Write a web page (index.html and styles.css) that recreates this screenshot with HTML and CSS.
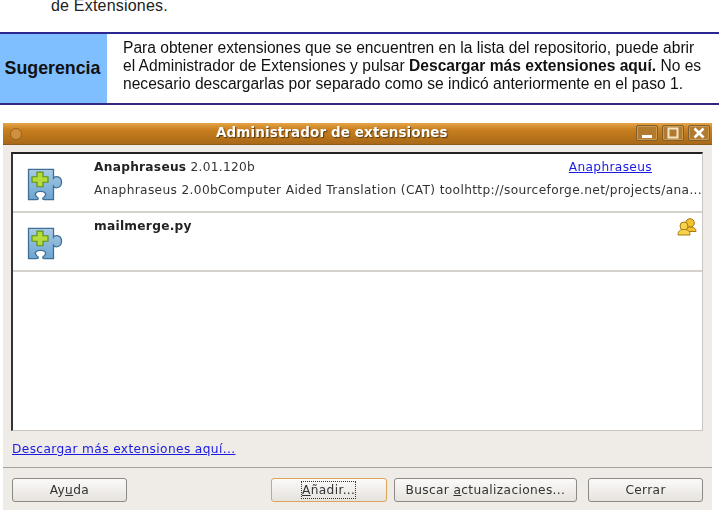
FILE: index.html
```html
<!DOCTYPE html>
<html lang="es">
<head>
<meta charset="UTF-8">
<title>Administrador de extensiones</title>
<link rel="stylesheet" href="styles.css">
</head>
<body>
<p class="step">de Extensiones.</p>

<div class="tip">
  <div class="tip-label">Sugerencia</div>
  <div class="tip-text">Para obtener extensiones que se encuentren en la lista del repositorio, puede abrir el Administrador de Extensiones y pulsar <strong>Descargar más extensiones aquí.</strong> No es necesario descargarlas por separado como se indicó anteriormente en el paso 1.</div>
</div>

<div class="window">
  <div class="titlebar">
    <span class="title-dot"></span>
    <span class="title">Administrador de extensiones</span>
    <div class="title-buttons">
      <span class="title-btn"><svg width="14" height="12" viewBox="0 0 14 12"><rect x="2" y="8" width="10" height="3" fill="#fff"/></svg></span>
      <span class="title-btn"><svg width="14" height="12" viewBox="0 0 14 12"><rect x="2.500" y="1.500" width="9" height="9" fill="none" stroke="#f5e6c8" stroke-width="2"/></svg></span>
      <span class="title-btn"><svg width="14" height="12" viewBox="0 0 14 12"><path d="M2.500 1.500l9 9M11.500 1.500l-9 9" stroke="#fff" stroke-width="2.600"/></svg></span>
    </div>
  </div>
  <div class="content">
    <div class="list">
      <div class="row">
        <svg class="puzzle" width="36" height="33" viewBox="0 0 36 36" preserveAspectRatio="none">
          <use href="#puzzle-shape"/>
        </svg>
        <div class="row-main">
          <div class="row-head">
            <span><b>Anaphraseus</b> 2.01.120b</span>
            <a class="row-link" href="#">Anaphraseus</a>
          </div>
          <div class="row-desc">Anaphraseus 2.00bComputer Aided Translation (CAT) toolhttp://sourceforge.net/projects/ana...</div>
        </div>
      </div>
      <div class="row">
        <svg class="puzzle" width="36" height="33" viewBox="0 0 36 36" preserveAspectRatio="none">
          <defs>
            <linearGradient id="piece" x1="0" y1="0" x2="0" y2="1">
              <stop offset="0" stop-color="#a9cbe6"/>
              <stop offset="1" stop-color="#6ba5d0"/>
            </linearGradient>
            <g id="puzzle-shape">
              <path d="M1.500 1.500H26.500V11C28 8.500 34.500 8.500 34.500 15.500S28 22.500 26.500 20V34.500H17C15.500 34.500 15 33 17 31.500C20.500 28.500 18 25.500 13.500 25.500S6.500 28.500 10 31.500C12 33 11.500 34.500 10 34.500H1.500Z" fill="url(#piece)" stroke="#3f6f96" stroke-width="1.300"/>
              <path d="M10 4.500H16V9.500H21V15.500H16V20.500H10V15.500H5V9.500H10Z" fill="#b6dc3c" stroke="#5d8f1c" stroke-width="1.200"/>
            </g>
          </defs>
          <use href="#puzzle-shape"/>
        </svg>
        <div class="row-main">
          <div class="row-head">
            <span><b>mailmerge.py</b></span>
            <svg class="users" width="20" height="18" viewBox="0 0 20 18">
              <circle cx="13" cy="5" r="4.300" fill="#f2c230" stroke="#a87a10"/>
              <path d="M8 13.500c0-3.500 2-4.500 5-4.500s6 1 6 4.500z" fill="#f2c230" stroke="#a87a10"/>
              <circle cx="7" cy="8" r="4" fill="#f7d24a" stroke="#a87a10"/>
              <path d="M1 17c0-4 2-5.500 6-5.500S13 13 13 17z" fill="#f7d24a" stroke="#a87a10"/>
            </svg>
          </div>
        </div>
      </div>
    </div>
    <a class="more" href="#">Descargar más extensiones aquí...</a>
  </div>
  <div class="actions">
    <button class="btn btn-help">Ay<u>u</u>da</button>
    <button class="btn btn-add"><span class="focus"><u>A</u>ñadir...</span></button>
    <button class="btn btn-update">Buscar <u>a</u>ctualizaciones...</button>
    <button class="btn btn-close">Cerrar</button>
  </div>
</div>
</body>
</html>
```

FILE: styles.css
```css
html, body {
  margin: 0;
  height: 513px;
  overflow: hidden;
  background: #fff;
}

body {
  font-family: "Liberation Sans", Arial, sans-serif;
  color: #111;
}

.step {
  margin: 0;
  height: 32px;
  padding-left: 51px;
  font-size: 16px;
  letter-spacing: 0.2px;
  line-height: 12px;
  box-sizing: border-box;
  color: #222;
}

/* tip box */
.tip {
  display: flex;
  height: 73px;
  box-sizing: border-box;
  border-top: 2px solid #2b2690;
  border-bottom: 2px solid #322a80;
}

.tip-label {
  width: 107px;
  flex: none;
  background: #7fbfff;
  display: flex;
  align-items: center;
  justify-content: center;
  padding-right: 2px;
  box-sizing: border-box;
  font-size: 17.800px;
  font-weight: bold;
}

.tip-text {
  padding: 5px 12px 0 16px;
  font-size: 15.600px;
  line-height: 18px;
  filter: blur(0.25px);
}

/* dialog */
.window {
  width: 709px;
  margin: 18px 0 0 3px;
  height: 387px;
  background: #efebe7;
  font-family: "DejaVu Sans", Verdana, sans-serif;
  font-size: 12.200px;
  letter-spacing: 0.35px;
  color: #333;
  filter: blur(0.4px);
}

.titlebar {
  height: 21px;
  background: linear-gradient(#e6a54a, #c9801f 30%, #b5711a 75%, #a9691a);
  border-bottom: 1px solid #8a5a1c;
  display: flex;
  align-items: center;
  position: relative;
}

.title-dot {
  width: 10px;
  height: 10px;
  margin-left: 7px;
  border-radius: 50%;
  border: 1px solid #9a6420;
  background: #d09040;
}

.title {
  position: absolute;
  left: 213px;
  top: 1px;
  font-weight: bold;
  font-size: 13.500px;
  letter-spacing: 0.1px;
  color: #fff;
  text-shadow: 1px 1px 1px #5a3a10;
}

.title-buttons {
  margin-left: auto;
  margin-right: 2px;
  margin-bottom: 2px;
  display: flex;
  gap: 4px;
}

.title-btn {
  width: 22px;
  height: 16px;
  box-sizing: border-box;
  border: 1px solid #80602c;
  border-radius: 2px;
  background: #b27a2e;
  box-shadow: inset 0 0 0 1px #c99a52;
  display: flex;
  align-items: center;
  justify-content: center;
}

.content {
  padding: 7px 9px 0 8px;
}

.list {
  height: 279px;
  box-sizing: border-box;
  background: #fff;
  border: 1px solid #c9c5c0;
  border-top: 2px solid #222;
  border-left: 2px solid #333;
}

.row {
  display: flex;
  height: 59px;
  box-sizing: border-box;
  border-bottom: 2px solid #d4d1cd;
  padding: 14px 0 0 14px;
}

.puzzle {
  flex: none;
}

.row-main {
  margin-left: 31px;
  margin-top: -13px;
  flex: 1;
  min-width: 0;
  padding-right: 3px;
}

.row-head {
  display: flex;
  justify-content: space-between;
  height: 24px;
  margin-bottom: 4px;
  align-items: center;
  padding-right: 2px;
}

.row-head span {
  letter-spacing: 0.27px;
}

.row-head b {
  color: #222;
}

.row-link {
  color: #1a1ae0;
  margin-right: 45px;
}

.users {
  margin-top: 2px;
}

.row-desc {
  white-space: nowrap;
}

.more {
  display: block;
  margin-top: 11px;
  margin-left: 1px;
  height: 25px;
  color: #1a1ae0;
  letter-spacing: 0.38px;
}

.actions {
  border-top: 1px solid #a6a39e;
  display: flex;
  padding: 10px 9px 0 9px;
  height: 42px;
  box-sizing: border-box;
}

.btn {
  height: 24px;
  padding: 0;
  box-sizing: border-box;
  border: 1px solid #8c8a85;
  border-radius: 3px;
  background: linear-gradient(#fbfaf9, #e6e2dd);
  font: inherit;
  letter-spacing: inherit;
  color: #333;
}

.btn-help {
  width: 115px;
}

.btn-add {
  width: 116px;
  margin-left: 144px;
  border-color: #dca35a;
}

.focus {
  border: 1px dotted #333;
  padding: 1px 0;
}

.btn-update {
  width: 184px;
  margin-left: 7px;
}

.btn-close {
  width: 115px;
  margin-left: 11px;
}
```
